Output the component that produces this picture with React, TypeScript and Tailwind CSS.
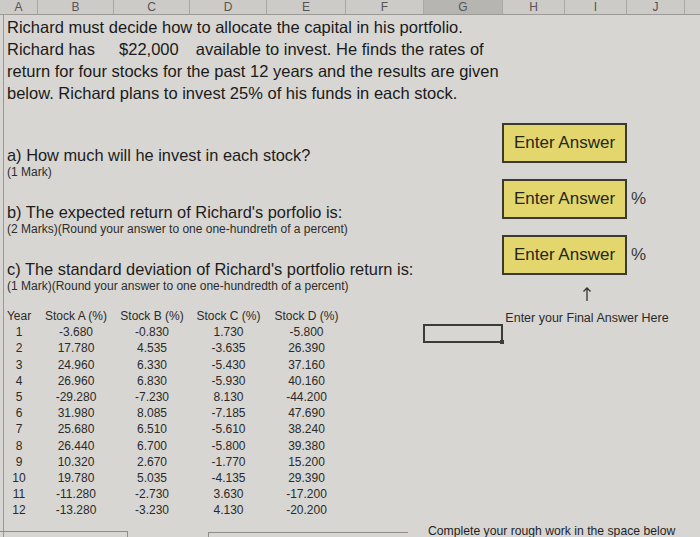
import React from 'react';

const columns = [
  { label: 'A', w: 38 },
  { label: 'B', w: 76 },
  { label: 'C', w: 76 },
  { label: 'D', w: 77 },
  { label: 'E', w: 79 },
  { label: 'F', w: 78 },
  { label: 'G', w: 79, active: true },
  { label: 'H', w: 62 },
  { label: 'I', w: 62 },
  { label: 'J', w: 58 },
];

const rows: [number, string, string, string, string][] = [
  [1, '-3.680', '-0.830', '1.730', '-5.800'],
  [2, '17.780', '4.535', '-3.635', '26.390'],
  [3, '24.960', '6.330', '-5.430', '37.160'],
  [4, '26.960', '6.830', '-5.930', '40.160'],
  [5, '-29.280', '-7.230', '8.130', '-44.200'],
  [6, '31.980', '8.085', '-7.185', '47.690'],
  [7, '25.680', '6.510', '-5.610', '38.240'],
  [8, '26.440', '6.700', '-5.800', '39.380'],
  [9, '10.320', '2.670', '-1.770', '15.200'],
  [10, '19.780', '5.035', '-4.135', '29.390'],
  [11, '-11.280', '-2.730', '3.630', '-17.200'],
  [12, '-13.280', '-3.230', '4.130', '-20.200'],
];

const questions = [
  { q: 'a) How much will he invest in each stock?', note: '(1 Mark)' },
  {
    q: "b) The expected return of Richard's porfolio is:",
    note: '(2 Marks)(Round your answer to one one-hundreth of a percent)',
  },
  {
    q: "c) The standard deviation of Richard's portfolio return is:",
    note: '(1 Mark)(Round your answer to one one-hundredth of a percent)',
  },
];

const AnswerBox = ({ percent }: { percent?: boolean }) => (
  <div className="flex items-center">
    <div className="w-[125px] h-[40px] bg-[#e2d66c] border-2 border-[#3a3a30] flex items-center justify-center text-[17px] text-[#262620]">
      Enter Answer
    </div>
    {percent && <span className="ml-[4px] text-[17px] text-[#3a3a3a]">%</span>}
  </div>
);

export default function App() {
  return (
    <div
      className="w-[700px] h-[537px] overflow-hidden bg-[#d8d6d2] text-[#1f1f1f]"
      style={{ fontFamily: '"Liberation Sans", Arial, sans-serif' }}
    >
      {/* Column header */}
      <div className="flex h-[15px] bg-[#cdcbc7] border-b border-[#9c9a96]">
        {columns.map((c) => (
          <div
            key={c.label}
            style={{ width: c.w }}
            className={`flex-shrink-0 flex items-center justify-center text-[12px] leading-none text-[#555] border-r border-[#aaa8a4] ${
              c.active ? 'bg-[#b7b5b1]' : ''
            }`}
          >
            {c.label}
          </div>
        ))}
        <div className="flex-1" />
      </div>

      {/* Sheet body */}
      <div className="relative h-[522px] ml-[3px] border-l border-[#9a9894]">
        <div className="pl-[3px] pt-[1px] text-[16.5px] leading-[22px] text-[#1a1a1a]">
          <p>Richard must decide how to allocate the capital in his portfolio.</p>
          <p>
            Richard has<span className="ml-[24px]">$22,000</span>
            <span className="ml-[17px]">available to invest. He finds the rates of</span>
          </p>
          <p>return for four stocks for the past 12 years and the results are given</p>
          <p>below. Richard plans to invest 25% of his funds in each stock.</p>
        </div>

        <div className="flex">
          {/* Left column */}
          <div className="w-[419px] flex-shrink-0">
            <div className="pl-[3px] mt-[41px] flex flex-col gap-[22px]">
              {questions.map((item) => (
                <div key={item.q}>
                  <div className="text-[16.4px] leading-[20px] text-[#1c1c1c]">{item.q}</div>
                  <div className="text-[12px] leading-[15px] text-[#2c2c2c]">{item.note}</div>
                </div>
              ))}
            </div>

            {/* Data table */}
            <div className="mt-[14px] -ml-[4px] text-[12px] leading-[16.2px] text-[#2a2a2a]">
              <div className="grid grid-cols-[38px_76px_76px_77px_79px] text-center">
                <div>Year</div>
                <div>Stock A (%)</div>
                <div>Stock B (%)</div>
                <div>Stock C (%)</div>
                <div>Stock D (%)</div>
              </div>
              {rows.map((r) => (
                <div
                  key={r[0]}
                  className="grid grid-cols-[38px_76px_76px_77px_79px] text-center"
                >
                  {r.map((v, i) => (
                    <div key={i}>{v}</div>
                  ))}
                </div>
              ))}
              <div className="mt-[12px] flex items-end gap-[80px]">
                <div className="w-[128px] h-[6px] border-t border-r border-[#8f8d89]" />
                <div className="w-[200px] h-[5px] border-t border-l border-[#8f8d89]" />
              </div>
            </div>
          </div>

          {/* Right column */}
          <div className="flex-1 flex flex-col">
            <div className="ml-[79px] mt-[19px] flex flex-col gap-[16px]">
              <AnswerBox />
              <AnswerBox percent />
              <AnswerBox percent />
            </div>

            <div className="flex mt-[9px]">
              <div className="w-[80px] flex-shrink-0 pt-[40px]">
                <div className="relative w-[80px] h-[19px] border-2 border-[#3c3c36]">
                  <div className="absolute -right-[3px] -bottom-[3px] w-[4px] h-[4px] bg-[#3c3c36]" />
                </div>
              </div>
              <div className="flex flex-col items-center w-[168px] text-[#2a2a2a]">
                <svg width="10" height="15" viewBox="0 0 10 15" className="mt-[3px]">
                  <path d="M5 14V1M1.5 4.5L5 1l3.5 3.5" fill="none" stroke="#333" strokeWidth="1.3" />
                </svg>
                <div className="mt-[9px] text-[12.5px] leading-[15px] whitespace-nowrap">
                  Enter your Final Answer Here
                </div>
              </div>
            </div>

            <div className="mt-[181px] ml-[5px] text-[12.2px] leading-[15px] text-[#1f1f1f] whitespace-nowrap">
              Complete your rough work in the space below
            </div>
          </div>
        </div>
      </div>
    </div>
  );
}
